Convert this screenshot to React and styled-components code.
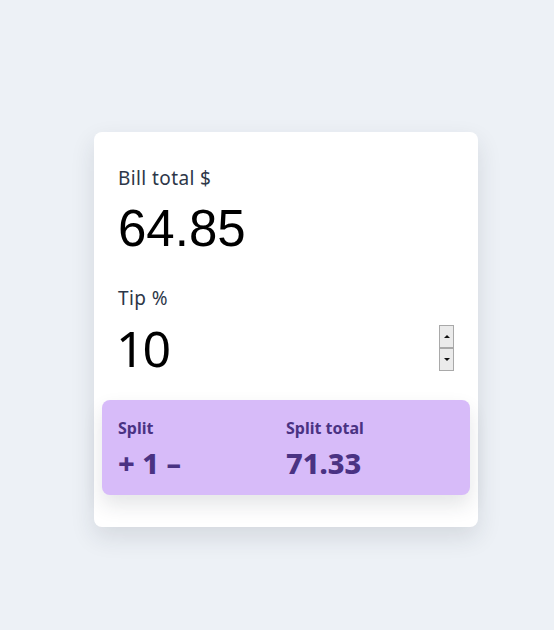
import React, { useState } from "react";
import styled, { createGlobalStyle } from "styled-components";

const Global = createGlobalStyle`
  html, body { margin: 0; padding: 0; background: #edf1f6; }
  body { font-family: "Noto Sans", "Open Sans", sans-serif; }
  * { box-sizing: border-box; }
`;

const Page = styled.div`
  min-height: 630px;
  padding: 132px 0 0 94px;
`;

const Card = styled.div`
  width: 384px;
  height: 395px;
  background: #ffffff;
  border-radius: 8px;
  box-shadow: 0 10px 25px rgba(30, 40, 60, 0.12);
  padding: 34px 8px 0 8px;
  display: flex;
  flex-direction: column;
`;

const Field = styled.div`
  display: flex;
  flex-direction: column;
  padding: 0 16px;
  margin-top: ${(p) => p.$top || 0}px;
`;

const Label = styled.label`
  font-family: "Noto Sans", sans-serif;
  font-size: 19px;
  line-height: 24px;
  letter-spacing: 0.4px;
  color: #2d3748;
`;

const InputRow = styled.div`
  display: flex;
  align-items: center;
  justify-content: space-between;
  height: 64px;
  margin-top: ${(p) => p.$top || 0}px;
`;

const Value = styled.div`
  font-family: ${(p) => (p.$arial ? '"Liberation Sans", Arial, sans-serif' : '"Noto Sans", sans-serif')};
  font-size: ${(p) => (p.$arial ? 51 : 50)}px;
  letter-spacing: ${(p) => (p.$arial ? 0 : -2)}px;
  margin-left: ${(p) => (p.$arial ? 0 : -2)}px;
  line-height: 64px;
  color: #000;
`;

const Spinner = styled.div`
  display: flex;
  flex-direction: column;
`;

const SpinBtn = styled.div`
  width: 15px;
  height: 23px;
  background: #ebebeb;
  border: 1px solid #a9a9a9;
  display: flex;
  align-items: center;
  justify-content: center;
`;

const Tri = styled.div`
  width: 0;
  height: 0;
  border-left: 3px solid transparent;
  border-right: 3px solid transparent;
  ${(p) => (p.$up ? "border-bottom: 3px solid #111;" : "border-top: 3px solid #111;")}
`;

const SplitBox = styled.div`
  margin-top: 20px;
  background: #d7bbf9;
  border-radius: 8px;
  height: 95px;
  box-shadow: 0 10px 20px rgba(30, 40, 60, 0.12);
  display: grid;
  grid-template-columns: 168px 1fr;
  padding: 17px 16px 0 16px;
  color: #4a3283;
`;

const Col = styled.div`
  display: flex;
  flex-direction: column;
`;

const SplitLabel = styled.div`
  font-family: "Noto Sans", sans-serif;
  font-weight: 700;
  font-size: 16px;
  line-height: 22px;
`;

const SplitValue = styled.div`
  font-family: "Noto Sans", sans-serif;
  font-weight: 800;
  font-size: 29px;
  line-height: 40px;
  margin-top: 4px;
`;

export default function App() {
  const [split] = useState(1);
  return (
    <>
      <Global />
      <Page>
        <Card>
          <Field>
            <Label>Bill total $</Label>
            <InputRow $top={7}>
              <Value $arial>64.85</Value>
            </InputRow>
          </Field>
          <Field $top={25}>
            <Label>Tip %</Label>
            <InputRow $top={6}>
              <Value>10</Value>
              <Spinner>
                <SpinBtn><Tri $up /></SpinBtn>
                <SpinBtn><Tri /></SpinBtn>
              </Spinner>
            </InputRow>
          </Field>
          <SplitBox>
            <Col>
              <SplitLabel>Split</SplitLabel>
              <SplitValue>+ {split} –</SplitValue>
            </Col>
            <Col>
              <SplitLabel>Split total</SplitLabel>
              <SplitValue>71.33</SplitValue>
            </Col>
          </SplitBox>
        </Card>
      </Page>
    </>
  );
}
